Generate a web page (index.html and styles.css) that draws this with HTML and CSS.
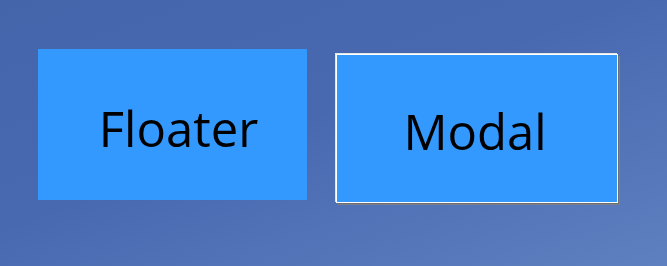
FILE: index.html
```html
<!DOCTYPE html>
<html>
<head>
<meta charset="utf-8">
<link rel="stylesheet" href="styles.css">
</head>
<body>
<div class="stage">
  <div class="btn floater"><span class="label">Floater</span></div>
  <div class="btn modal"><span class="label">Modal</span></div>
</div>
</body>
</html>
```
FILE: styles.css
```css
html, body {
  margin: 0;
  padding: 0;
  width: 667px;
  height: 266px;
  overflow: hidden;
}
body {
  background: linear-gradient(160deg, #4465aa 0%, #4869b0 45%, #5e80c0 100%);
  font-family: "Open Sans", "Noto Sans", sans-serif;
}
.stage {
  display: flex;
  align-items: flex-start;
  padding: 49px 0 0 38px;
  gap: 29px;
}
.btn {
  background: #3399ff;
  color: #000;
  display: flex;
  align-items: center;
  justify-content: center;
  box-sizing: border-box;
  font-size: 49px;
  line-height: 1;
}
.floater {
  width: 269px;
  height: 151px;
  padding: 7px 0 0 12px;
}
.modal {
  margin-top: 5px;
  width: 282px;
  height: 149px;
  border: 1px solid #ffffff;
  box-shadow: -1px -1px 0 #e6e6e6, 1px 1px 0 #6e6e6e, 2px 2px 0 #7a7f8c;
  padding: 6px 4px 0 0;
}
```
